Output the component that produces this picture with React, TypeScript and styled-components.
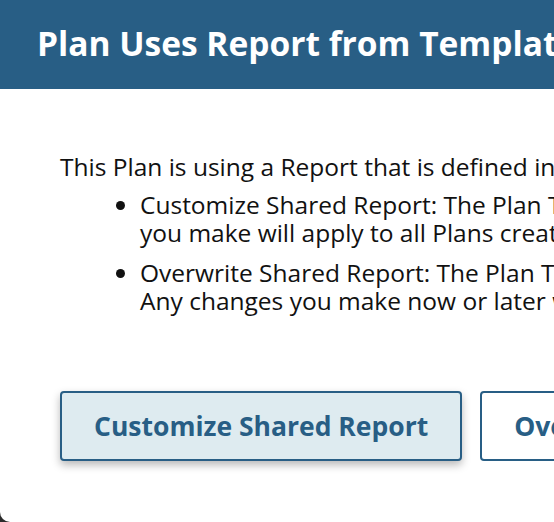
import React from 'react'
import styled, { createGlobalStyle } from 'styled-components'

const GlobalStyle = createGlobalStyle`
  html, body {
    margin: 0;
    padding: 0;
    background: #2b2b2b;
    overflow: hidden;
  }
  body {
    font-family: "Open Sans", Lato, sans-serif;
  }
`

const Modal = styled.div`
  width: 1000px;
  height: 522px;
  background: #ffffff;
  border-bottom-left-radius: 10px;
  overflow: hidden;
  display: flex;
  flex-direction: column;
`

const Header = styled.div`
  height: 89px;
  flex-shrink: 0;
  background: #285e85;
  display: flex;
  align-items: center;
  padding: 0 0 4px 37px;
  box-sizing: border-box;
`

const Title = styled.h1`
  margin: 0;
  color: #ffffff;
  font-size: 33.5px;
  font-weight: 700;
  white-space: nowrap;
`

const Body = styled.div`
  padding: 64px 60px 0;
  color: #111111;
  font-size: 24.5px;
  line-height: 28px;
`

const Intro = styled.p`
  margin: 0;
  white-space: nowrap;
`

const List = styled.ul`
  margin: 10px 0 0;
  padding-left: 80px;
`

const Item = styled.li`
  white-space: nowrap;
  & + & {
    margin-top: 12px;
  }
`

const ButtonRow = styled.div`
  display: flex;
  gap: 18px;
  margin-top: 76px;
`

const Button = styled.button<{ $primary?: boolean }>`
  height: 70px;
  padding: 0 32px;
  border: 2px solid #285e85;
  border-radius: 4px;
  background: ${p => (p.$primary ? '#deebf0' : '#ffffff')};
  box-shadow: ${p => (p.$primary ? '0 4px 8px rgba(0, 0, 0, 0.28)' : 'none')};
  color: #285e85;
  font-family: "Open Sans", Lato, sans-serif;
  font-size: 26.5px;
  font-weight: 700;
  white-space: nowrap;
  cursor: pointer;
`

const App = () => {
    return (
        <>
            <GlobalStyle />
            <Modal>
                <Header>
                    <Title>Plan Uses Report from Template</Title>
                </Header>
                <Body>
                    <Intro>This Plan is using a Report that is defined in the Plan Template.</Intro>
                    <List>
                        <Item>
                            Customize Shared Report: The Plan Template's Report will be edited. Any changes
                            <br />
                            you make will apply to all Plans created from this Template.
                        </Item>
                        <Item>
                            Overwrite Shared Report: The Plan Template's Report will be replaced.
                            <br />
                            Any changes you make now or later will apply only to this Plan.
                        </Item>
                    </List>
                    <ButtonRow>
                        <Button $primary>Customize Shared Report</Button>
                        <Button>Overwrite Shared Report</Button>
                    </ButtonRow>
                </Body>
            </Modal>
        </>
    )
}

export default App
